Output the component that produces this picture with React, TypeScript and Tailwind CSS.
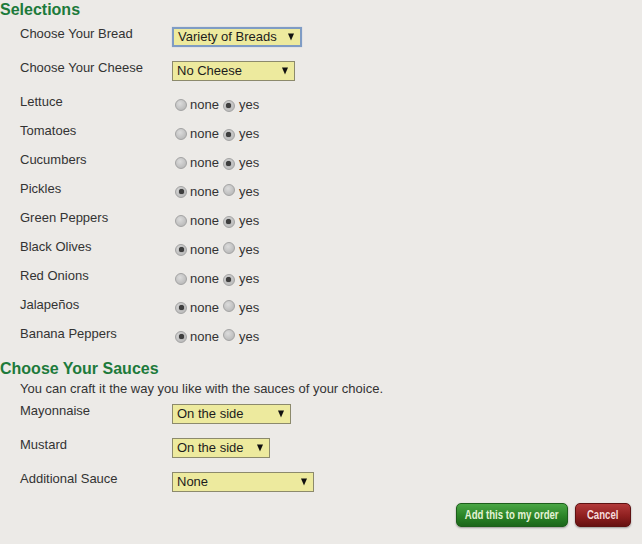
import React from "react";

const font = { fontFamily: '"Liberation Sans", Arial, sans-serif' };

function Select({ value, width, focus }: { value: string; width: number; focus?: boolean }) {
  return (
    <div
      className={
        "relative flex h-[20px] items-center bg-[#edea9e] pl-[4px] text-[13px] leading-[18px] text-[#1c1c1c] " +
        (focus ? "border-2 border-[#7f9cc4] shadow-[0_0_1px_#a9bfdc]" : "border border-[#8c8a6c]")
      }
      style={{ width }}
    >
      <span>{value}</span>
      <span className="absolute right-[6px] top-1/2 -translate-y-1/2 border-x-[3.5px] border-t-[7px] border-x-transparent border-t-[#111]" />
    </div>
  );
}

function Radio({ checked }: { checked?: boolean }) {
  return (
    <span className="relative inline-flex h-[12px] w-[12px] items-center justify-center rounded-full border border-[#a3a3a3] bg-[radial-gradient(circle_at_40%_35%,#dcdcdc,#b0b0b0)]">
      {checked && <span className="h-[5px] w-[5px] rounded-full bg-[#3e3e3e] shadow-[0_0_1px_#222]" />}
    </span>
  );
}

function RadioRow({ label, yes }: { label: string; yes: boolean }) {
  return (
    <div className="flex h-[29px] items-start">
      <div className="w-[155px] text-[13px] leading-[14px] text-[#333]">{label}</div>
      <div className="mt-[2px] flex items-center text-[13px] leading-[14px] text-[#333]">
        <Radio checked={!yes} />
        <span className="ml-[3px] mt-[1px]">none</span>
        <span className="ml-[4px]"><Radio checked={yes} /></span>
        <span className="ml-[4px] mt-[1px]">yes</span>
      </div>
    </div>
  );
}

function SelectRow({ label, value, width, focus, h = 34 }: { label: string; value: string; width: number; focus?: boolean; h?: number }) {
  return (
    <div className="flex items-start" style={{ height: h }}>
      <div className="w-[152px] text-[13px] leading-[14px] text-[#333]">{label}</div>
      <div className="mt-[0px]">
        <Select value={value} width={width} focus={focus} />
      </div>
    </div>
  );
}

export default function App() {
  const toppings: [string, boolean][] = [
    ["Lettuce", true],
    ["Tomatoes", true],
    ["Cucumbers", true],
    ["Pickles", false],
    ["Green Peppers", true],
    ["Black Olives", false],
    ["Red Onions", true],
    ["Jalapeños", false],
    ["Banana Peppers", false],
  ];
  const narrow = { fontFamily: '"Liberation Sans", Arial, sans-serif' };
  return (
    <div className="h-[544px] w-[642px] overflow-hidden bg-[#eceae7] pt-[1px]" style={font}>
      <h2 className="h-[18px] text-[16px] font-bold leading-[18px] text-[#1d7a3b]">Selections</h2>
      <div className="mt-[8px] pl-[20px]">
        <SelectRow label="Choose Your Bread" value="Variety of Breads" width={130} focus />
        <SelectRow label="Choose Your Cheese" value="No Cheese" width={123} />
        {toppings.map(([l, y]) => (
          <RadioRow key={l} label={l} yes={y} />
        ))}
      </div>
      <h2 className="mt-[4px] h-[18px] text-[16px] font-bold leading-[18px] text-[#1d7a3b]">Choose Your Sauces</h2>
      <div className="pl-[20px]">
        <p className="mt-[4px] text-[13px] leading-[14px] text-[#333]">
          You can craft it the way you like with the sauces of your choice.
        </p>
        <div className="mt-[8px]">
          <SelectRow label="Mayonnaise" value="On the side" width={119} />
          <SelectRow label="Mustard" value="On the side" width={98} />
          <SelectRow label="Additional Sauce" value="None" width={142} h={31} />
        </div>
      </div>
      <div className="flex justify-end gap-[7px] pr-[11px]">
        <button
          className="flex h-[24px] w-[112px] items-center justify-center whitespace-nowrap rounded-[5px] border border-[#1d5e1b] bg-[linear-gradient(#4aa645,#2b8427_55%,#1b661a)] text-[12px] font-bold text-[#e4f3d6] shadow-[0_1px_2px_rgba(0,0,0,0.35)]"
          style={narrow}
        >
          <span className="inline-block scale-x-[0.8]">Add this to my order</span>
        </button>
        <button
          className="flex h-[24px] w-[56px] items-center justify-center whitespace-nowrap rounded-[5px] border border-[#5e1212] bg-[linear-gradient(#b23a3a,#8e1f1f_55%,#661010)] text-[12px] font-bold text-[#f6dcdc] shadow-[0_1px_2px_rgba(0,0,0,0.35)]"
          style={narrow}
        >
          <span className="inline-block scale-x-[0.8]">Cancel</span>
        </button>
      </div>
    </div>
  );
}
